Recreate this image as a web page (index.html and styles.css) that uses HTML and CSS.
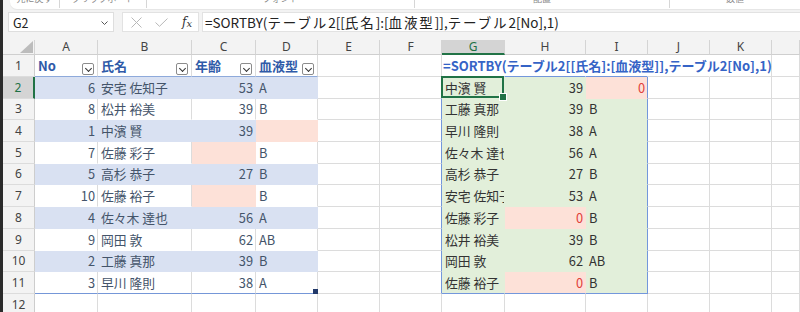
FILE: index.html
```html
<!DOCTYPE html>
<html lang="ja">
<head>
<meta charset="utf-8">
<title>SORTBY</title>
<link rel="stylesheet" href="styles.css">
</head>
<body>
<div class="app">
  <div class="strip"></div>
  <div class="main">
    <div class="ribbon">
      <span class="grp w1"><span class="lbl">元に戻す</span></span>
      <span class="grp w2"><span class="lbl">クリップボード</span></span>
      <span class="grp w3"><span class="lbl">フォント</span></span>
      <span class="grp w4"><span class="lbl">配置</span></span>
      <span class="grp w5"><span class="lbl">数値</span></span>
    </div>
    <div class="fbar">
      <div class="namebox"><span>G2</span><svg class="nb-chev" width="7" height="4" viewBox="0 0 7 4"><polyline points="0.5,0.5 3.5,3.5 6.5,0.5" fill="none" stroke="#555" stroke-width="1"/></svg></div>
      <div class="fxbox">
        <svg width="11" height="11" viewBox="0 0 11 11"><path d="M0.5 0.5 L10.5 10.5 M10.5 0.5 L0.5 10.5" stroke="#b8b8b8" stroke-width="1" fill="none"/></svg>
        <svg width="13" height="9" viewBox="0 0 13 9"><polyline points="0.5,4.5 4.5,8.3 12.5,0.5" stroke="#b8b8b8" stroke-width="1" fill="none"/></svg>
        <span class="fx"><i>f</i><i class="fxx">x</i></span>
      </div>
      <div class="formula">=SORTBY(<span class="jp">テーブル</span>2[[<span class="jp">氏名</span>]:[<span class="jp">血液型</span>]],<span class="jp">テーブル</span>2[No],1)</div>
    </div>
    <div class="sheet">
      <div class="row colhdr">
        <span class="corner"></span>
        <span>A</span><span>B</span><span>C</span><span>D</span><span>E</span><span>F</span><span class="sel">G</span><span>H</span><span>I</span><span>J</span><span>K</span><span></span>
      </div>
      <div class="row r22">
        <span class="rh">1</span>
        <span class="th"><span>No</span><i class="dd"></i></span>
        <span class="th"><span>氏名</span><i class="dd"></i></span>
        <span class="th"><span>年齢</span><i class="dd"></i></span>
        <span class="th"><span>血液型</span><i class="dd"></i></span>
        <span></span><span></span>
        <span class="ftxt st">=SORTBY(テーブル2[[氏名]:[血液型]],テーブル2[No],1)</span>
        <span class="ov st"></span><span class="ov st"></span><span class="ov"></span><span></span><span></span>
      </div>
      <div class="row r22">
        <span class="rh sel">2</span>
        <span class="b n">6</span><span class="b">安宅 佐知子</span><span class="b n">53</span><span class="b">A</span>
        <span></span><span class="sl"></span>
        <span class="g cur">中濱 賢</span><span class="g n">39</span><span class="p n red sr">0</span>
        <span></span><span></span><span></span>
      </div>
      <div class="row r21">
        <span class="rh">3</span>
        <span class="w n">8</span><span class="w">松井 裕美</span><span class="w n">39</span><span class="w">B</span>
        <span></span><span class="sl"></span>
        <span class="g">工藤 真那</span><span class="g n">39</span><span class="g sr">B</span>
        <span></span><span></span><span></span>
      </div>
      <div class="row r22">
        <span class="rh">4</span>
        <span class="b n">1</span><span class="b">中濱 賢</span><span class="b n">39</span><span class="p"></span>
        <span></span><span class="sl"></span>
        <span class="g">早川 隆則</span><span class="g n">38</span><span class="g sr">A</span>
        <span></span><span></span><span></span>
      </div>
      <div class="row r22">
        <span class="rh">5</span>
        <span class="w n">7</span><span class="w">佐藤 彩子</span><span class="p"></span><span class="w">B</span>
        <span></span><span class="sl"></span>
        <span class="g">佐々木 達也</span><span class="g n">56</span><span class="g sr">A</span>
        <span></span><span></span><span></span>
      </div>
      <div class="row r21">
        <span class="rh">6</span>
        <span class="b n">5</span><span class="b">高杉 恭子</span><span class="b n">27</span><span class="b">B</span>
        <span></span><span class="sl"></span>
        <span class="g">高杉 恭子</span><span class="g n">27</span><span class="g sr">B</span>
        <span></span><span></span><span></span>
      </div>
      <div class="row r22">
        <span class="rh">7</span>
        <span class="w n">10</span><span class="w">佐藤 裕子</span><span class="p"></span><span class="w">B</span>
        <span></span><span class="sl"></span>
        <span class="g">安宅 佐知子</span><span class="g n">53</span><span class="g sr">A</span>
        <span></span><span></span><span></span>
      </div>
      <div class="row r22">
        <span class="rh">8</span>
        <span class="b n">4</span><span class="b">佐々木 達也</span><span class="b n">56</span><span class="b">A</span>
        <span></span><span class="sl"></span>
        <span class="g">佐藤 彩子</span><span class="p n red">0</span><span class="g sr">B</span>
        <span></span><span></span><span></span>
      </div>
      <div class="row r22">
        <span class="rh">9</span>
        <span class="w n">9</span><span class="w">岡田 敦</span><span class="w n">62</span><span class="w">AB</span>
        <span></span><span class="sl"></span>
        <span class="g">松井 裕美</span><span class="g n">39</span><span class="g sr">B</span>
        <span></span><span></span><span></span>
      </div>
      <div class="row r21">
        <span class="rh">10</span>
        <span class="b n">2</span><span class="b">工藤 真那</span><span class="b n">39</span><span class="b">B</span>
        <span></span><span class="sl"></span>
        <span class="g">岡田 敦</span><span class="g n">62</span><span class="g sr">AB</span>
        <span></span><span></span><span></span>
      </div>
      <div class="row r22">
        <span class="rh">11</span>
        <span class="w x n">3</span><span class="w x">早川 隆則</span><span class="w x n">38</span><span class="w x rs">A</span>
        <span></span><span class="sl"></span>
        <span class="g sb">佐藤 裕子</span><span class="p sb n red">0</span><span class="g sb sr">B</span>
        <span></span><span></span><span></span>
      </div>
      <div class="row r22">
        <span class="rh">12</span>
        <span></span><span></span><span></span><span></span><span></span><span></span><span></span><span></span><span></span><span></span><span></span><span></span>
      </div>
    </div>
  </div>
</div>
</body>
</html>
```

FILE: styles.css
```css
* { box-sizing: border-box; margin: 0; padding: 0; }
html, body { width: 800px; height: 312px; overflow: hidden; background: #fff; }
body { font-family: "Noto Sans CJK JP", "Noto Sans", sans-serif; color: #333; }

.app { display: flex; height: 312px; }
.strip { width: 3px; flex: none; background: #2b2b2b; }
.main { flex: 1; min-width: 0; display: flex; flex-direction: column; background: #f3f3f3; }

/* ribbon remnant */
.ribbon {
  height: 9px; margin-left: 7px; background: #fff; display: flex; overflow: hidden;
  border-radius: 0 0 0 7px; box-shadow: 0 1px 1px rgba(0,0,0,0.06);
}
.grp { height: 8px; display: flex; justify-content: center; align-items: flex-end; border-right: 1px solid #d6d6d6; flex: none; }
.w1 { width: 50px; }
.w2 { width: 87px; }
.w3 { width: 268px; }
.w4 { width: 255px; }
.w5 { flex: 1; border-right: 0; }
.lbl { font-size: 9px; line-height: 10px; margin-bottom: 4px; color: #888; white-space: nowrap; }

/* formula bar */
.fbar { height: 31px; flex: none; display: flex; padding: 3px 0 8px 5px; }
.namebox {
  width: 106px; margin-right: 8px; background: #fff; border: 1px solid #dedede;
  display: flex; align-items: center; justify-content: space-between; padding: 0 5px 0 4px;
  font-size: 12.5px; color: #222;
}
.nb-chev { margin-top: 2px; }
.fxbox {
  width: 77px; margin-right: 3px; background: #fff; border: 1px solid #e2e2e2;
  display: flex; align-items: center; padding-left: 8px; gap: 13px;
}
.fx { font-family: "DejaVu Serif", "Liberation Serif", serif; font-size: 12px; color: #333; margin-left: 1px; }
.fxx { font-size: 10px; position: relative; top: 1px; }
.formula {
  flex: 1; background: #fff; border: 1px solid #e2e2e2; border-right: 0;
  font-size: 13.5px; line-height: 18px; padding-left: 2px; color: #222; white-space: nowrap; overflow: hidden;
}
.jp { letter-spacing: 1.9px; }

/* sheet grid */
.sheet { flex: 1; background: #fff; overflow: hidden; }
.row {
  display: grid;
  grid-template-columns: 32px 63px 94px 64px 62px 62px 62px 63px 81px 62px 62px 62px 1fr;
}
.r22 { height: 22px; }
.r21 { height: 21px; }
.row > * {
  border-right: 1px solid #dcdcdc; border-bottom: 1px solid #dcdcdc;
  font-size: 12.8px; line-height: 21px; padding: 0 3px;
  white-space: nowrap; overflow: hidden; color: #333;
}
.r21 > * { line-height: 20px; }

.colhdr { height: 15px; }
.colhdr > * {
  background: #f3f3f3; text-align: center; font-family: "Noto Sans", sans-serif;
  font-size: 12px; line-height: 14px; color: #444; border-right-color: #d4d4d4; border-bottom-color: #cfcfcf;
}
.colhdr > .sel { background: #d4d4d4; color: #1e7145; border-bottom: 2px solid #217346; line-height: 13px; }
.colhdr > .corner { position: relative; }
.corner::after {
  content: ""; position: absolute; right: 1px; bottom: 1px; width: 13px; height: 12px;
  background: #bcbcbc; clip-path: polygon(100% 0, 100% 100%, 0 100%);
}

.row > .rh {
  background: #f3f3f3; text-align: center; padding: 0; color: #444; font-family: "Noto Sans", sans-serif;
  font-size: 12px; border-right-color: #cdcdcd; border-bottom-color: #dcdcdc;
}
.row > .rh.sel { background: #d4d4d4; color: #1e7145; border-right: 2px solid #217346; }

/* table */
.row > .th {
  display: flex; align-items: center; font-weight: bold; color: #2f5aa8; font-size: 13px;
  border-bottom-color: #8eaadb;
}
.dd {
  margin-left: auto; align-self: flex-end; margin-bottom: 1px; width: 12px; height: 12px;
  border: 1px solid #8c8c8c; border-radius: 2px; background: #fff; position: relative; flex: none;
}
.dd::after {
  content: ""; position: absolute; left: 3px; top: 2px; width: 4px; height: 4px;
  border-right: 1.3px solid #333; border-bottom: 1.3px solid #333; transform: rotate(45deg);
}
.row > .b { background: #d9e1f2; border-color: transparent; color: #44546a; }
.row > .w { border-bottom-color: transparent; color: #44546a; }
.row > .x { border-bottom-color: #7597d8; }
.row > .p { background: #fde1d8; border-color: transparent; }
.row > .rs { position: relative; overflow: visible; }
.rs::after { content: ""; position: absolute; right: -1px; bottom: -1px; width: 5px; height: 5px; background: #22396a; }
.n { text-align: right; }
.row > .n { padding-right: 2px; }
.row > .red { color: #e0403a; }

/* spill */
.row > .g { background: #e2efda; border-color: transparent; }
.row > .sl { border-right-color: #7397dc; }
.row > .sr { border-right-color: #7397dc; }
.row > .sb { border-bottom-color: #7397dc; }
.row > .st { border-bottom-color: #7397dc; }
.row > .ftxt {
  overflow: visible; position: relative; z-index: 1; font-weight: bold; color: #3563c6;
  font-size: 13px; border-right-color: transparent; padding-left: 1px;
}
.row > .ov { border-right-color: transparent; }
.row > .cur { position: relative; overflow: visible; z-index: 2; }
.cur::before {
  content: ""; position: absolute; inset: -1px 0 0 -1px; border: 2px solid #217346;
}
.cur::after {
  content: ""; position: absolute; right: -3px; bottom: -3px; width: 6px; height: 6px;
  background: #217346; border: 1px solid #fff;
}
```
